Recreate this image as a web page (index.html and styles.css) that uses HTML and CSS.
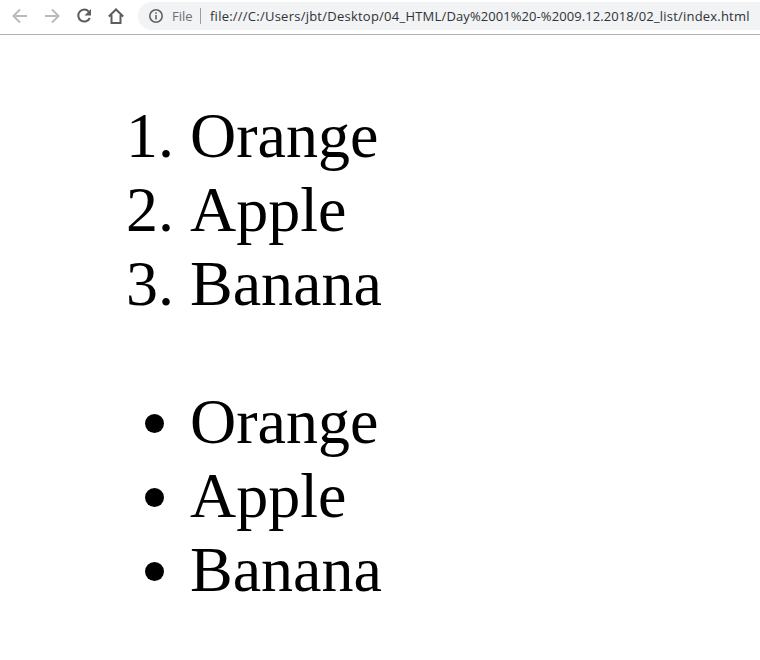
FILE: index.html
```html
<!DOCTYPE html>
<html lang="en">
<head>
<meta charset="utf-8">
<title>Lists</title>
<link rel="stylesheet" href="styles.css">
</head>
<body>
<header class="toolbar">
  <svg class="icon icon-muted" viewBox="0 0 16 16"><path d="M15 8H2M8 1.500L1.500 8L8 14.500"/></svg>
  <svg class="icon icon-muted" viewBox="0 0 16 16"><path d="M1 8h13M8 1.500L14.500 8L8 14.500"/></svg>
  <svg class="icon" viewBox="0 0 16 16"><path d="M12.800 3.600A6 6 0 1 0 13.800 10"/><path class="solid" d="M15 1v6.500H8.500z"/></svg>
  <svg class="icon" viewBox="0 0 16 16"><path d="M.8 8.500L8 1.500l7.200 7M3.500 7v8h9V7"/></svg>
  <div class="address">
    <svg class="info" viewBox="0 0 14 14"><circle cx="7" cy="7" r="6.200"/><path d="M7 6v4.500M7 3.300v1.500"/></svg>
    <span class="scheme">File</span>
    <span class="divider"></span>
    <span class="url"><span class="folder">file:///C:/Users/jbt/Desktop/04_HTML/</span><span class="dated">Day%2001%20-%2009.12.2018</span>/02_list/index.html</span>
  </div>
</header>
<main class="page">
  <ol class="list">
    <li>Orange</li>
    <li>Apple</li>
    <li>Banana</li>
  </ol>
  <ul class="list bullets">
    <li>Orange</li>
    <li>Apple</li>
    <li>Banana</li>
  </ul>
</main>
</body>
</html>
```
FILE: styles.css
```css
body {
  margin: 0;
  height: 660px;
  overflow: hidden;
  background: #fff;
  color: #000;
}

.toolbar {
  display: flex;
  box-sizing: border-box;
  height: 35px;
  padding: 2px 0 2px 12px;
  border-bottom: 1px solid #b0b1b1;
  font-family: "Open Sans", "Noto Sans", sans-serif;
  font-size: 13px;
}

.icon {
  flex: none;
  width: 16px;
  height: 16px;
  margin: 6px 16px 0 0;
  fill: none;
  stroke: #5a5d61;
  stroke-width: 2;
}

.icon-muted {
  stroke: #bababa;
}

.icon .solid {
  fill: #5a5d61;
  stroke: none;
}

.address {
  display: flex;
  flex: 1;
  align-items: center;
  box-sizing: border-box;
  height: 28px;
  margin-left: -2px;
  padding-left: 11px;
  border-radius: 14px 0 0 14px;
  background: #f1f3f4;
  white-space: nowrap;
}

.info {
  flex: none;
  width: 14px;
  height: 14px;
  fill: none;
  stroke: #5f6368;
  stroke-width: 1.6;
}

.scheme {
  width: 28px;
  margin-left: 9px;
  color: #6b6f74;
}

.divider {
  width: 1px;
  height: 16px;
  margin-right: 9px;
  background: #9b9ea2;
}

.url {
  color: #303236;
  letter-spacing: 0.2px;
}

.folder {
  letter-spacing: 0.24px;
}

.dated {
  letter-spacing: 0.07px;
}

.page {
  padding: 64px 0 0 190px;
  font-family: "Liberation Serif", serif;
  font-size: 64px;
  line-height: 74px;
}

.list {
  margin: 0 0 64px;
  padding: 0;
}

.bullets {
  list-style: none;
}

.bullets li {
  display: flex;
  align-items: center;
}

.bullets li::before {
  content: "";
  width: 19px;
  height: 19px;
  margin: 2px 26px 0 -45px;
  border-radius: 50%;
  background: #000;
}
```
